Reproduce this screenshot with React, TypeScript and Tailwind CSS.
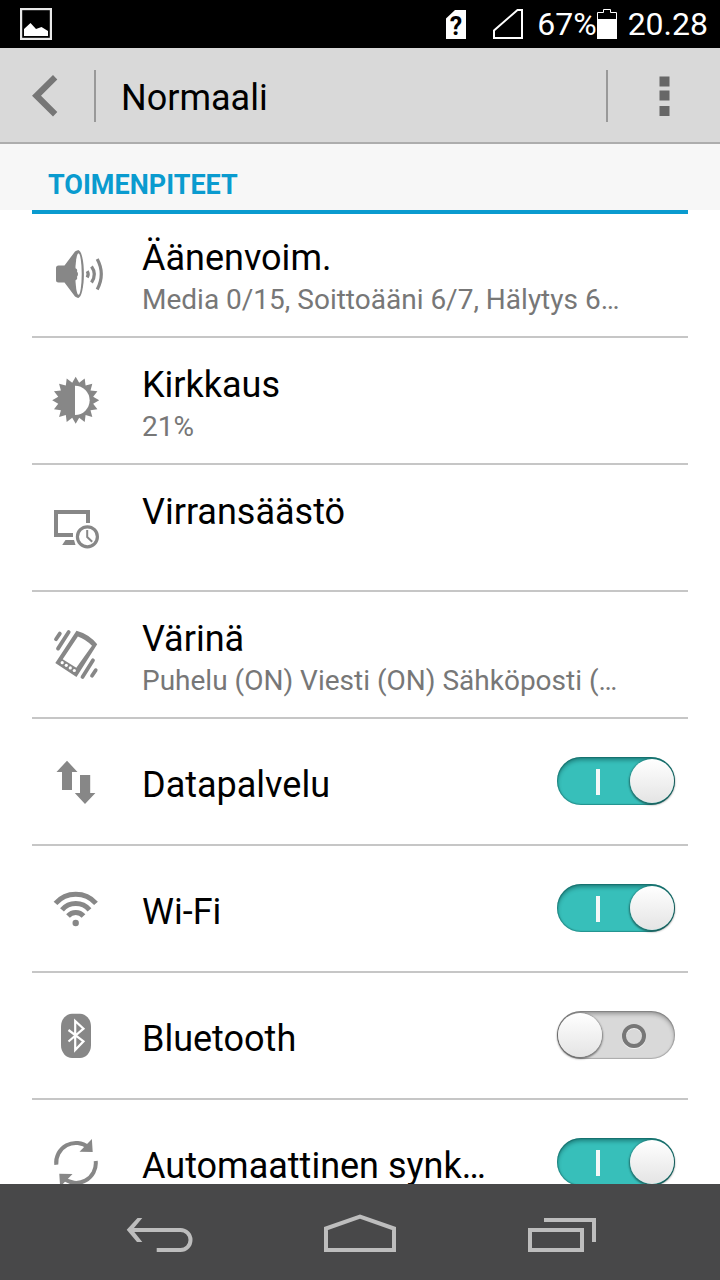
import { useState } from "react";
import type { ReactNode } from "react";

type Setting = {
  id: string;
  title: string;
  icon: ReactNode;
  summary?: string;
  toggle?: boolean;
};

// Row icons share a 64x64 canvas
function RowIcon({ children }: { children: ReactNode }) {
  return (
    <svg viewBox="0 0 64 64" className="size-16 shrink-0 text-[#878787]" fill="currentColor" aria-hidden="true">
      {children}
    </svg>
  );
}

function VolumeIcon() {
  return (
    <RowIcon>
      <path d="M14.500 23.500H20.500L31 9.500Q32.500 8 35 8.500V55.500Q32.500 56 31 54.500L20.500 40.500H14.500Q12 40.500 12 38V26Q12 23.500 14.500 23.500Z" />
      <ellipse cx="34.300" cy="32" rx="5.600" ry="23.700" />
      <ellipse cx="34.500" cy="32" rx="3.200" ry="20.800" fill="white" />
      <path d="M30.500 26Q34 26.500 33 29.500Q35 32 33 34.800Q34 38 30.500 38.500Z" />
      <g fill="none" stroke="currentColor" strokeWidth="3.200">
        <path d="M43.200 29.200Q45.200 32.200 43.200 35.500" />
        <path d="M47.500 24.500Q53.200 32.200 47.500 40.500" />
        <path d="M53.200 17Q61.400 32 53.200 47.500" />
      </g>
    </RowIcon>
  );
}

function BrightnessIcon() {
  // 16 spikes, alternating outer and inner radius
  const points = Array.from({ length: 32 }, (_, i) => {
    const r = i % 2 === 0 ? 23.5 : 17.8;
    const a = (i * Math.PI) / 16;
    return `${(31.7 + r * Math.sin(a)).toFixed(2)},${(31.3 - r * Math.cos(a)).toFixed(2)}`;
  }).join(" ");

  return (
    <RowIcon>
      <polygon points={points} />
      <path d="M31 16.700A14.600 14.600 0 0 1 31 46Z" fill="white" />
    </RowIcon>
  );
}

function PowerSavingIcon() {
  return (
    <RowIcon>
      <path d="M29 39H12V16H44V27" fill="none" stroke="currentColor" strokeWidth="4" />
      <path d="M21.500 44H30L31.500 49H18.200Z" />
      <circle cx="43.400" cy="40.800" r="10" fill="none" stroke="currentColor" strokeWidth="3.200" />
      <path d="M43.200 34V41L48.200 45.800" fill="none" stroke="currentColor" strokeWidth="2" />
    </RowIcon>
  );
}

function VibrationIcon() {
  return (
    <RowIcon>
      <path
        fillRule="evenodd"
        d="M32.500 7.700Q45 11 53.200 21.200L32.500 54L11.300 40ZM33.900 13.500L18.700 36.300L32.300 44.800L48 22.800Q42 16.500 33.900 13.500Z"
      />
      <g fill="white">
        <circle cx="18.200" cy="39.700" r="1.600" />
        <circle cx="22.300" cy="42.300" r="1.600" />
        <circle cx="26.300" cy="44.900" r="1.600" />
        <circle cx="30.300" cy="47.500" r="1.600" />
      </g>
      <g fill="none" stroke="currentColor" strokeWidth="3.800" strokeLinecap="round">
        <path d="M15.800 10.600L12 16.200M24.700 9L14 25.600M49 37.300L38.500 54M51.700 47.200L48 52.700" />
      </g>
    </RowIcon>
  );
}

function DataIcon() {
  return (
    <RowIcon>
      <path d="M23 10.700L33.500 22H28V40H18V22H12.500Z" />
      <path d="M41 54L30.800 43H36V25H46.200V43H51.400Z" />
    </RowIcon>
  );
}

function WifiIcon() {
  return (
    <RowIcon>
      <g fill="none" stroke="currentColor" strokeWidth="5">
        <path d="M11.500 26.300A27 27 0 0 1 52 26.300" />
        <path d="M18 32.800A18 18 0 0 1 45.500 32.800" />
        <path d="M24 39A10.500 10.500 0 0 1 39.500 39" />
      </g>
      <circle cx="31.700" cy="46" r="3.200" />
    </RowIcon>
  );
}

function BluetoothIcon() {
  return (
    <RowIcon>
      <rect x="17" y="9.700" width="30" height="44.300" rx="11" ry="13" />
      <path d="M24.500 26L39.500 37.300L31.200 46V17L39.500 24.700L24.500 37.500" fill="none" stroke="white" strokeWidth="2.200" />
    </RowIcon>
  );
}

function SyncIcon() {
  const half = (
    <>
      <path d="M12.300 33.800A19.700 19.700 0 0 1 44.500 16.500" fill="none" stroke="currentColor" strokeWidth="4" />
      <path d="M47.900 8L48.700 21L35.500 20.800Z" />
    </>
  );

  return (
    <RowIcon>
      {half}
      <g transform="rotate(180 32 31.900)">{half}</g>
    </RowIcon>
  );
}

const SETTINGS: Setting[] = [
  { id: "volume", title: "Äänenvoim.", summary: "Media 0/15, Soittoääni 6/7, Hälytys 6…", icon: <VolumeIcon /> },
  { id: "brightness", title: "Kirkkaus", summary: "21%", icon: <BrightnessIcon /> },
  { id: "power", title: "Virransäästö", summary: "", icon: <PowerSavingIcon /> },
  { id: "vibration", title: "Värinä", summary: "Puhelu (ON) Viesti (ON) Sähköposti (…", icon: <VibrationIcon /> },
  { id: "data", title: "Datapalvelu", toggle: true, icon: <DataIcon /> },
  { id: "wifi", title: "Wi-Fi", toggle: true, icon: <WifiIcon /> },
  { id: "bluetooth", title: "Bluetooth", toggle: true, icon: <BluetoothIcon /> },
  { id: "sync", title: "Automaattinen synk…", toggle: true, icon: <SyncIcon /> },
];

function StatusBar() {
  return (
    <div className="flex h-12 shrink-0 items-center bg-black pl-5 pr-3 text-[32px] leading-12 text-white">
      <svg viewBox="0 0 32 32" className="size-8" aria-hidden="true">
        <rect x="1" y="1" width="30" height="30" fill="none" stroke="#e8e8e8" strokeWidth="2.400" />
        <path d="M4 28V21L10.500 15L16 21L21.500 19L28 23V28Z" fill="white" />
      </svg>

      <div className="ml-auto flex items-center">
        <svg viewBox="0 0 20 30" className="mr-[27px] h-[30px] w-5" aria-hidden="true">
          <path d="M9 1H20V30H0V9.500Z" fill="white" />
          <text x="10" y="25.500" textAnchor="middle" fontSize="25" fontWeight="700" fill="black">
            ?
          </text>
        </svg>
        <svg viewBox="0 0 30 30" className="mr-3.5 h-[30px] w-[30px]" aria-hidden="true">
          <path d="M1 29V21.500L24.500 1H29V29Z" fill="none" stroke="white" strokeWidth="2" />
        </svg>
        <span>67%</span>
        <svg viewBox="0 0 20 30" className="mr-[11px] h-[30px] w-5" aria-hidden="true">
          <path d="M.5 11V3.500H6.500V.5H13.500V3.500H19.500V11" fill="none" stroke="white" />
          <path d="M0 10H20V30H0Z" fill="white" />
        </svg>
        <span>20.28</span>
      </div>
    </div>
  );
}

function ActionBar() {
  return (
    <header className="flex h-24 shrink-0 items-center border-b-2 border-[#adadad] bg-[#d9d9d9] pt-0.5">
      <button type="button" aria-label="Takaisin" className="flex h-full w-[94px] items-center pl-8">
        <svg viewBox="0 0 26 42" className="h-[42px] w-[26px]" aria-hidden="true">
          <path d="M0 20.700L21 0L25.300 4.500L9 20.700L25.300 37L21 41.500Z" fill="#767676" />
        </svg>
      </button>
      <div className="h-[52px] w-0.5 bg-[#999999]" />
      <h1 className="flex-1 truncate pt-1 pl-[25px] text-4xl leading-12 text-black">Normaali</h1>
      <div className="h-[52px] w-0.5 bg-[#999999]" />
      <button type="button" aria-label="Lisää" className="flex h-full w-28 items-center justify-center">
        <svg viewBox="0 0 12 42" className="h-[42px] w-3" fill="#676767" aria-hidden="true">
          <path d="M1.500 1.500H11.500V11.500H1.500ZM1.500 15.500H11.500V25.500H1.500ZM1.500 31H11.500V41H1.500Z" />
        </svg>
      </button>
    </header>
  );
}

function Toggle({ id, checked, onChange }: { id: string; checked: boolean; onChange: () => void }) {
  return (
    <span className="relative block h-12 w-[118px] shrink-0">
      <input
        id={id}
        type="checkbox"
        role="switch"
        checked={checked}
        onChange={onChange}
        className="block h-full w-full appearance-none rounded-full bg-[#d9d9d9] shadow-[inset_0_0_1px_1px_rgba(0,0,0,0.2),inset_0_3px_4px_rgba(0,0,0,0.3)] checked:bg-[#37bfba] checked:shadow-[inset_0_0_1px_1px_rgba(0,70,65,0.35),inset_0_3px_4px_rgba(0,50,50,0.45)]"
      />
      {checked ? (
        <span className="pointer-events-none absolute top-3 left-[39px] h-[26px] w-1 bg-[#f4f8f8]" />
      ) : (
        <span className="pointer-events-none absolute top-[13px] left-[65px] size-6 rounded-full border-4 border-[#777777] shadow-[0_1px_0_#f2f2f2,inset_0_1px_0_#f2f2f2]" />
      )}
      <span
        className={`pointer-events-none absolute top-[2px] size-11 rounded-full bg-linear-to-b from-white to-[#e4e4e4] shadow-[0_1px_2px_1px_rgba(0,0,0,0.45)] ${
          checked ? "right-px" : "left-px"
        }`}
      />
    </span>
  );
}

function NavBar() {
  return (
    <nav className="flex h-24 shrink-0 justify-center bg-[#484849] text-[#bdbdbd]">
      <button type="button" aria-label="Edellinen" className="flex w-[200px] items-center justify-center">
        <svg viewBox="0 0 80 48" className="h-12 w-20" fill="none" stroke="currentColor" strokeWidth="4" aria-hidden="true">
          <path d="M10 22H60.500A10 10 0 0 1 60.500 42H36.700" />
          <path d="M17.500 10H22.300L12.500 21.800L22.300 34H17L6.700 21.800Z" fill="currentColor" stroke="none" />
        </svg>
      </button>
      <button type="button" aria-label="Aloitusnäyttö" className="flex w-[200px] items-center justify-center">
        <svg viewBox="0 0 80 48" className="h-12 w-20" fill="none" stroke="currentColor" strokeWidth="4" aria-hidden="true">
          <path d="M6 42V20.500L40 8.500L74 20.500V42Z" />
        </svg>
      </button>
      <button type="button" aria-label="Viimeisimmät" className="flex w-[200px] items-center justify-center">
        <svg viewBox="0 0 80 48" className="h-12 w-20" fill="none" stroke="currentColor" strokeWidth="4" aria-hidden="true">
          <path d="M10 22H62V42H10Z" />
          <path d="M24 12H74V34" />
        </svg>
      </button>
    </nav>
  );
}

function App() {
  const [enabled, setEnabled] = useState<Record<string, boolean>>({
    data: true,
    wifi: true,
    bluetooth: false,
    sync: true,
  });

  const handleToggle = (id: string) => {
    setEnabled((prev) => ({ ...prev, [id]: !prev[id] }));
  };

  return (
    <div className="flex h-screen flex-col bg-white font-['Roboto',sans-serif]">
      <StatusBar />
      <ActionBar />

      {/* Settings list */}
      <main className="min-h-0 flex-1 overflow-hidden">
        <div className="bg-[#f7f7f7] px-12 pt-[21px] pb-[5px]">
          <h2 className="text-[27px] leading-10 font-bold text-[#0a9bcf]">TOIMENPITEET</h2>
        </div>
        <div className="mx-8 h-1 bg-[#0a9bcf]" />

        <ul className="mx-8 -mt-[3px]">
          {SETTINGS.map((item) => (
            <li key={item.id} className="flex h-[127px] items-center border-b-2 border-[#c6c6c6] pr-[13px] pl-3">
              {item.icon}
              {item.toggle ? (
                <>
                  <label
                    htmlFor={item.id}
                    className="min-w-0 flex-1 truncate pt-1.5 pl-[34px] text-4xl leading-[42px] text-black"
                  >
                    {item.title}
                  </label>
                  <div className="pb-0.5">
                    <Toggle id={item.id} checked={enabled[item.id]} onChange={() => handleToggle(item.id)} />
                  </div>
                </>
              ) : (
                <div className="min-w-0 flex-1 pt-2.5 pl-[34px]">
                  <h3 className="truncate text-4xl leading-[42px] text-black">{item.title}</h3>
                  <p className="h-[42px] truncate text-[28px] leading-[42px] text-[#777777]">{item.summary}</p>
                </div>
              )}
            </li>
          ))}
        </ul>
      </main>

      <NavBar />
    </div>
  );
}

export default App;
